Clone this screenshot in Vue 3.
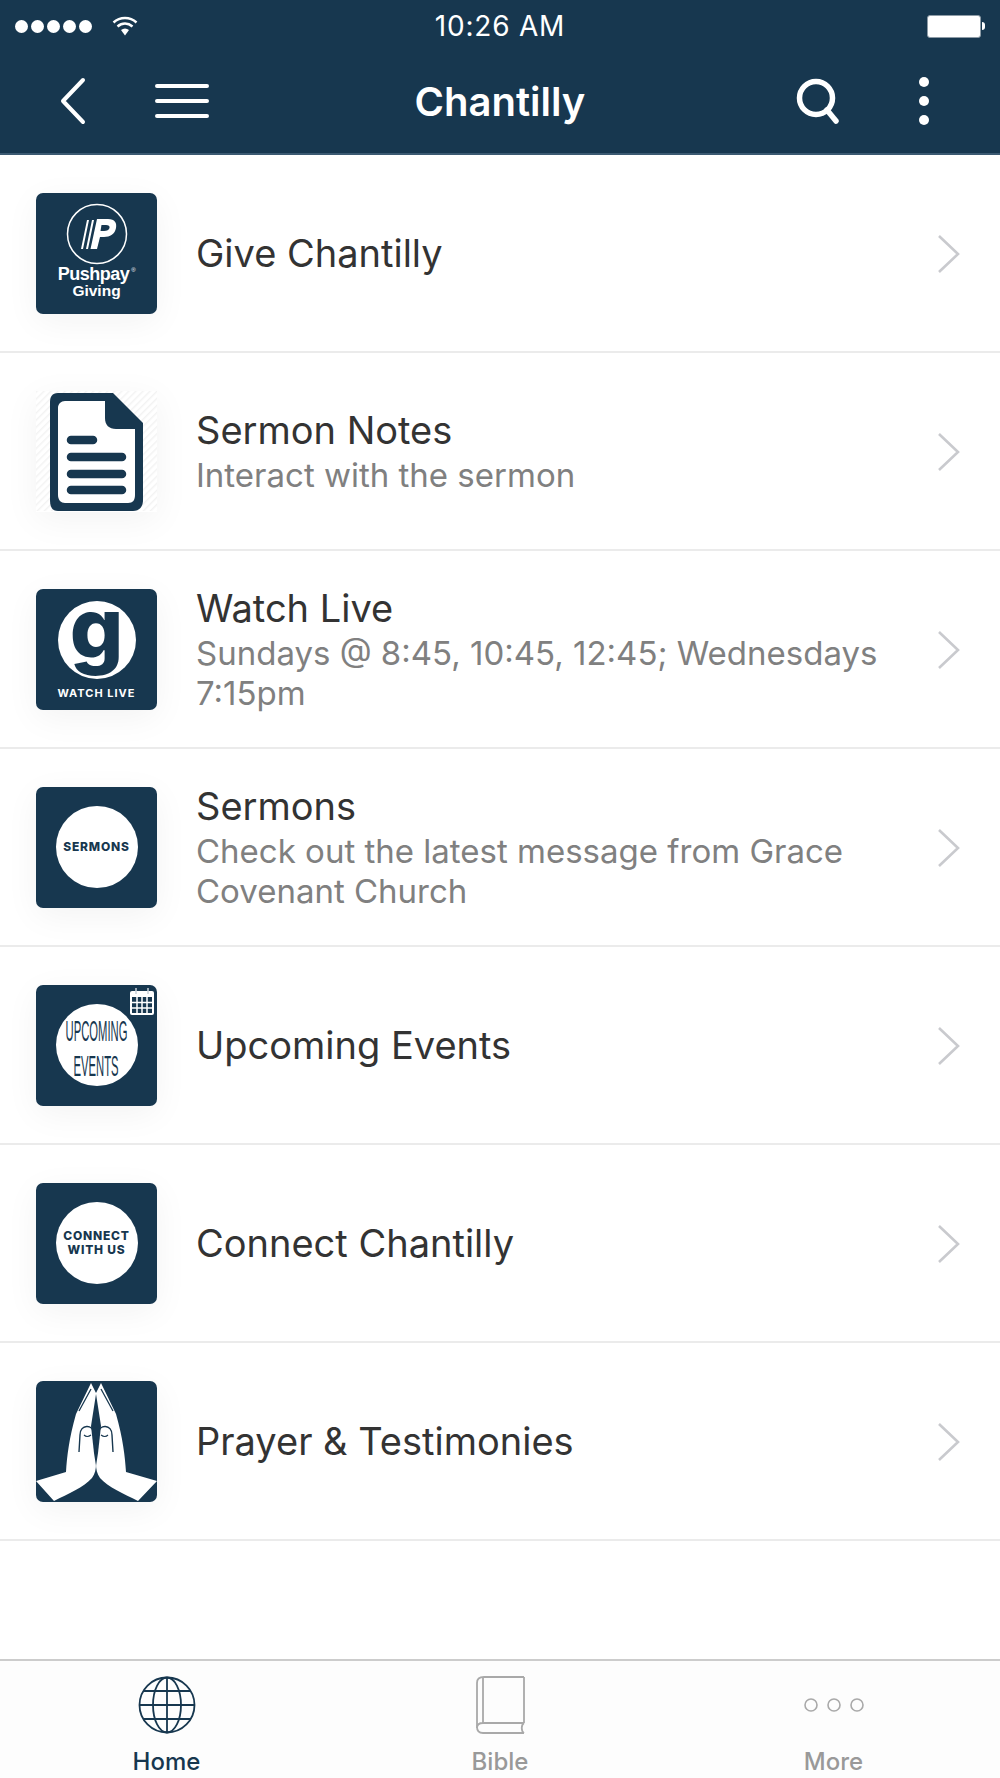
<template>
  <div class="screen">
    <header class="top">
      <div class="status">
        <div class="signal">
          <i v-for="n in 5" :key="n" class="dot"></i>
          <svg class="wifi" width="26" height="22" viewBox="0 0 26 22">
            <path d="M1.5 7.5C8 1.5 18 1.5 24.500 7.500" fill="none" stroke="#fff" stroke-width="2.400"/>
            <path d="M5.500 11.500C10 7.500 16 7.500 20.500 11.500" fill="none" stroke="#fff" stroke-width="2.400"/>
            <path d="M9 15C11.500 13 14.500 13 17 15L13 20.500Z" fill="#fff"/>
          </svg>
        </div>
        <span class="time">10:26 AM</span>
        <div class="battery"><i></i></div>
      </div>
      <div class="nav">
        <div class="nav-left">
          <svg width="30" height="48" viewBox="0 0 30 48">
            <path d="M25 3L5 24L25 45" fill="none" stroke="#fff" stroke-width="4" stroke-linecap="round" stroke-linejoin="round"/>
          </svg>
          <svg width="54" height="36" viewBox="0 0 54 36">
            <path d="M2 3H52M2 18H52M2 33H52" stroke="#fff" stroke-width="4" stroke-linecap="round"/>
          </svg>
        </div>
        <h1 class="title">Chantilly</h1>
        <div class="nav-right">
          <svg width="46" height="46" viewBox="0 0 46 46">
            <circle cx="20" cy="20" r="16.500" fill="none" stroke="#fff" stroke-width="5.500"/>
            <path d="M31 32L40 43" stroke="#fff" stroke-width="5.500" stroke-linecap="round"/>
          </svg>
          <svg width="12" height="50" viewBox="0 0 12 50">
            <circle cx="6" cy="6" r="5" fill="#fff"/>
            <circle cx="6" cy="25" r="5" fill="#fff"/>
            <circle cx="6" cy="44" r="5" fill="#fff"/>
          </svg>
        </div>
      </div>
    </header>

    <main class="list">
      <div v-for="item in items" :key="item.title" class="row">
        <div class="thumb" :class="{ plain: item.kind === 'notes' }">
          <template v-if="item.kind === 'pushpay'">
            <svg class="pp-logo" width="62" height="62" viewBox="0 0 62 62">
              <circle cx="31" cy="31" r="29.500" fill="none" stroke="#fff" stroke-width="1.500"/>
              <path d="M21 17H23L17 46H15ZM26 17H28L22 46H20Z" fill="#fff"/>
              <path d="M31 16H42C49 16 51 20 50 25C49 31 44 34 38 34H34L31 46H24.500ZM35.500 22L34.500 28H38C41 28 43 27 43.500 25C44 23 42.500 22 40 22Z" fill="#fff"/>
            </svg>
            <span class="pp-name">Pushpay<sup>®</sup></span>
            <span class="pp-sub">Giving</span>
          </template>

          <svg v-else-if="item.kind === 'notes'" width="121" height="121" viewBox="0 0 121 121">
            <defs>
              <pattern id="hatch" width="5" height="5" patternUnits="userSpaceOnUse" patternTransform="rotate(45)">
                <rect width="5" height="5" fill="#fff"/>
                <rect width="1.500" height="5" fill="#f3f3f3"/>
              </pattern>
            </defs>
            <rect width="121" height="120" fill="url(#hatch)"/>
            <path d="M22 2H77L107 32V109C107 116 103 120 97 120H22C16 120 14 116 14 109V11C14 6 16 2 22 2Z" fill="#17374f"/>
            <path d="M29 10H69V27C69 34 73 38 80 38H99V104C99 109 97 112 92 112H29C25 112 22 109 22 104V17C22 13 25 10 29 10Z" fill="#fff"/>
            <path d="M35 49H57M35 66H86M35 83H86M35 99H86" stroke="#17374f" stroke-width="8.500" stroke-linecap="round"/>
          </svg>

          <template v-else-if="item.kind === 'watch'">
            <div class="disc small-disc">
              <span class="g">g</span>
            </div>
            <span class="watch-label">WATCH LIVE</span>
          </template>

          <div v-else-if="item.kind === 'sermons'" class="disc">
            <span class="disc-text">SERMONS</span>
          </div>

          <template v-else-if="item.kind === 'events'">
            <svg class="cal" width="24" height="28" viewBox="0 0 24 28">
              <rect y="4" width="24" height="24" rx="2" fill="#fff"/>
              <rect x="2" y="10" width="20" height="16" fill="#17374f"/>
              <path d="M7 10V26M12 10V26M17 10V26M2 15.500H22M2 21H22" stroke="#fff" stroke-width="1.500"/>
              <path d="M6 1V7M18 1V7" stroke="#c7d0d7" stroke-width="1.500"/>
            </svg>
            <div class="disc events-disc">
              <span class="events-text">UPCOMING</span>
              <span class="events-text">EVENTS</span>
            </div>
          </template>

          <div v-else-if="item.kind === 'connect'" class="disc">
            <span class="disc-text two">CONNECT<br>WITH US</span>
          </div>

          <svg v-else width="121" height="121" viewBox="0 0 121 121">
            <path d="M0 100L30 91C31 75 33 58 40 33L55 2L60 12L65 2L80 33C87 58 89 75 90 91L121 100L102 120C88 113 72 106 64 97C61 93 60 88 60 83C60 88 59 93 56 97C48 106 32 113 18 120Z" fill="#fff"/>
            <path d="M60 13L55 45L58 72L60 85L62 72L65 45Z" fill="#17374f"/>
            <path d="M43 30L55 8M77 30L65 8" stroke="#17374f" stroke-width="1.300"/>
            <path d="M43 71L44 54C44 43 57 43 58 52M77 71L76 54C76 43 63 43 62 52" fill="none" stroke="#17374f" stroke-width="1.400"/>
            <path d="M48 54Q51 57 55 54M65 54Q69 57 72 54" fill="none" stroke="#17374f" stroke-width="1.100"/>
          </svg>
        </div>
        <div class="copy">
          <div class="item-title">{{ item.title }}</div>
          <div v-if="item.sub" class="item-sub">{{ item.sub }}</div>
        </div>
        <svg class="chev" width="26" height="42" viewBox="0 0 26 42">
          <path d="M3 3L22 21L3 39" fill="none" stroke="#c9cace" stroke-width="2.600"/>
        </svg>
      </div>
    </main>

    <nav class="tabs">
      <div class="tab active">
        <svg width="58" height="58" viewBox="0 0 58 58" fill="none" stroke="#17374f" stroke-width="1.800">
          <circle cx="29" cy="29" r="27.500"/>
          <ellipse cx="29" cy="29" rx="14" ry="27.500"/>
          <path d="M29 1.500V56.500M1.500 29H56.500M5 15H53M5 43H53"/>
        </svg>
        <span>Home</span>
      </div>
      <div class="tab">
        <svg width="50" height="58" viewBox="0 0 50 58" fill="none" stroke="#a9a9a9" stroke-width="1.800">
          <path d="M49 1H9C4 1 2 3 2 7V51C2 55 4 57 8 57H49"/>
          <path d="M8 1V47M2 52C2 49 4 47 8 47H49M49 1V47M49 47C46 49 46 55 49 57"/>
        </svg>
        <span>Bible</span>
      </div>
      <div class="tab">
        <svg width="60" height="58" viewBox="0 0 60 58" fill="none" stroke="#a9a9a9" stroke-width="1.600">
          <circle cx="7" cy="29" r="6"/>
          <circle cx="30" cy="29" r="6"/>
          <circle cx="53" cy="29" r="6"/>
        </svg>
        <span>More</span>
      </div>
    </nav>
  </div>
</template>

<script setup>
const items = [
  { kind: 'pushpay', title: 'Give Chantilly' },
  { kind: 'notes', title: 'Sermon Notes', sub: 'Interact with the sermon' },
  { kind: 'watch', title: 'Watch Live', sub: 'Sundays @ 8:45, 10:45, 12:45; Wednesdays 7:15pm' },
  { kind: 'sermons', title: 'Sermons', sub: 'Check out the latest message from Grace Covenant Church' },
  { kind: 'events', title: 'Upcoming Events' },
  { kind: 'connect', title: 'Connect Chantilly' },
  { kind: 'prayer', title: 'Prayer & Testimonies' },
]
</script>

<style>
html, body { margin: 0; background: #fff; }
</style>

<style scoped>
.screen {
  width: 1000px;
  height: 1778px;
  display: flex;
  flex-direction: column;
  font-family: Inter, "Liberation Sans", sans-serif;
  background: #fff;
  overflow: hidden;
}

.top {
  height: 155px;
  flex: none;
  background: #17374f;
  border-bottom: 2px solid #3b5a72;
  color: #fff;
  box-sizing: border-box;
  padding-top: 8px;
}

.status {
  height: 36px;
  display: flex;
  align-items: center;
  justify-content: space-between;
  padding: 0 19px 0 15px;
  position: relative;
}

.signal { display: flex; align-items: center; gap: 3px; }
.dot { width: 13px; height: 13px; border-radius: 50%; background: #fff; }
.wifi { margin-left: 17px; }

.time {
  position: absolute;
  left: 0;
  right: 0;
  text-align: center;
  font-size: 28px;
  letter-spacing: 0.8px;
}

.battery {
  width: 54px;
  height: 23px;
  box-sizing: border-box;
  border: 1px solid #8d9ba6;
  border-radius: 3px;
  position: relative;
  background: #fff;
}
.battery i {
  position: absolute;
  right: -5px;
  top: 6px;
  width: 3px;
  height: 8px;
  background: #fff;
  border-radius: 0 3px 3px 0;
}

.nav {
  height: 100px;
  margin-top: 7px;
  display: flex;
  align-items: center;
  justify-content: space-between;
  padding: 0 70px 0 58px;
  position: relative;
}
.nav-left { display: flex; align-items: center; gap: 67px; }
.nav-right { display: flex; align-items: center; gap: 76px; }

.title {
  position: absolute;
  left: 0;
  right: 0;
  margin: 0;
  text-align: center;
  font-size: 40px;
  font-weight: 600;
}

.list { flex: 1; }

.row {
  height: 198px;
  box-sizing: border-box;
  border-bottom: 2px solid #ebebeb;
  display: flex;
  align-items: center;
  padding: 0 38px 0 36px;
}

.thumb {
  width: 121px;
  height: 121px;
  flex: none;
  background: #17374f;
  border-radius: 7px;
  box-shadow: 0 8px 34px rgba(0, 0, 0, 0.05);
  display: flex;
  flex-direction: column;
  align-items: center;
  justify-content: center;
  color: #fff;
  position: relative;
}
.thumb.plain { background: #fff; border-radius: 0; }

.pp-logo { margin-bottom: 0; margin-top: -6px; }
.pp-name { font: 700 18px/18px "Liberation Sans", sans-serif; letter-spacing: -0.5px; }
.pp-name sup { font-size: 6px; font-weight: 400; vertical-align: 8px; line-height: 0; margin-left: 2px; }
.pp-sub { font: 700 15.500px/15px "Liberation Sans", sans-serif; }

.disc {
  width: 82px;
  height: 82px;
  border-radius: 50%;
  background: #fff;
  color: #17374f;
  display: flex;
  flex-direction: column;
  align-items: center;
  justify-content: center;
}
.small-disc { width: 78px; height: 78px; margin-top: -18px; }
.g {
  font: 800 84px/78px Inter, sans-serif;
  margin-top: -24px;
}
.watch-label {
  font: 700 11px/12px Inter, sans-serif;
  letter-spacing: 1px;
  position: absolute;
  bottom: 11px;
  left: 0;
  right: 0;
  text-align: center;
}
.disc-text {
  font: 800 12px/14px Inter, sans-serif;
  letter-spacing: 0.8px;
  text-align: center;
}
.disc-text.two { font-size: 12px; line-height: 14.500px; }

.events-disc { padding-top: 6px; box-sizing: border-box; }
.events-text {
  font: 400 30px/35px "Liberation Sans", sans-serif;
  display: block;
  transform: scaleX(0.375);
  white-space: nowrap;
}
.cal { position: absolute; top: 2px; right: 3px; }

.copy { flex: 1; margin-left: 39px; min-width: 0; padding-right: 20px; }

.item-title {
  font-size: 38px;
  line-height: 44px;
  color: #333;
}
.item-sub {
  font-size: 33px;
  line-height: 40px;
  color: #808080;
  margin-top: 3px;
}

.chev { flex: none; margin-top: 2px; }

.tabs {
  height: 119px;
  flex: none;
  box-sizing: border-box;
  border-top: 2px solid #ccc;
  background: #fdfdfd;
  display: flex;
  justify-content: space-between;
  padding: 15px 0 0;
}
.tab {
  width: 333px;
  display: flex;
  flex-direction: column;
  align-items: center;
  color: #999;
  font-size: 24px;
  font-weight: 500;
  gap: 14px;
}
.tab span { line-height: 28px; }
.tab.active { color: #17374f; }
</style>
